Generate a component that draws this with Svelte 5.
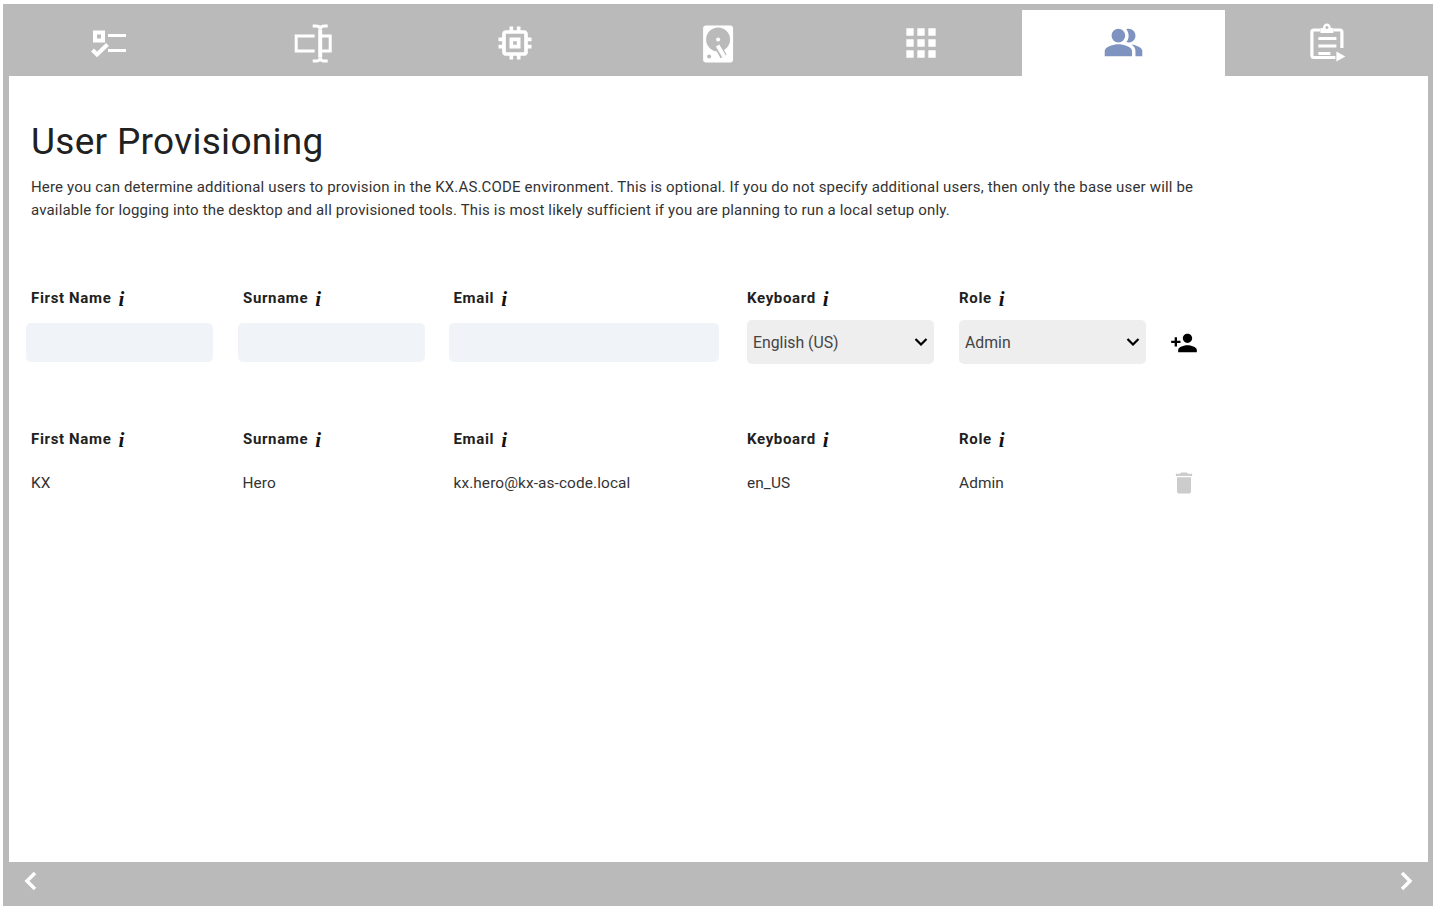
<script>
	const columns = ['First Name', 'Surname', 'Email', 'Keyboard', 'Role'];
	const users = [
		{ firstName: 'KX', surname: 'Hero', email: 'kx.hero@kx-as-code.local', keyboard: 'en_US', role: 'Admin' }
	];
	const keyboards = ['English (US)', 'German', 'French'];
	const roles = ['Admin', 'Normal'];
	const activeTab = 5;
</script>

{#snippet tabIcon(index)}
	{#if index === 0}
		<svg class="tab-svg" width="44" height="44" viewBox="87 20.500 44 44">
			<path fill-rule="evenodd" d="M93 30h12v12H93zM97 34v4h4v-4z" />
			<path d="M108 33.500h18v3h-18zM108 48.500h18v3h-18z" />
			<path fill="none" stroke="#fff" stroke-width="4" d="M92.500 49.500l4.500 4.500 10.500-10" />
		</svg>
	{:else if index === 1}
		<svg class="tab-svg" width="44" height="44" viewBox="290.300 20.500 44 44">
			<path fill="none" stroke="#fff" stroke-width="3" d="M315 35.500h-18.500v15H315M320 35.500h10.500v15H320" />
			<path fill="none" stroke="#fff" stroke-width="4" d="M320.500 29v28" />
			<path fill="none" stroke="#fff" stroke-width="3" d="M313 25.500h3q4.500 0 4.500 3.500 0-3.500 4.500-3.500h3M313 60.500h3q4.500 0 4.500-3.500 0 3.500 4.500 3.500h3" />
		</svg>
	{:else if index === 2}
		<svg class="tab-svg" width="44" height="44" viewBox="0 0 24 24">
			<path d="M15 9H9v6h6V9zm-2 4h-2v-2h2v2zm8-2V9h-2V7c0-1.100-.9-2-2-2h-2V3h-2v2h-2V3H9v2H7c-1.100 0-2 .9-2 2v2H3v2h2v2H3v2h2v2c0 1.100.9 2 2 2h2v2h2v-2h2v2h2v-2h2c1.100 0 2-.9 2-2v-2h2v-2h-2v-2h2zm-4 6H7V7h10v10z" />
		</svg>
	{:else if index === 3}
		<svg class="tab-svg" width="44" height="44" viewBox="695.900 20.500 44 44">
			<rect x="703" y="25" width="30" height="37" rx="3" />
			<circle cx="718" cy="39" r="12" fill="#bababa" />
			<circle cx="718" cy="39" r="2" />
			<path fill="none" stroke="#bababa" stroke-width="7" d="M717.500 45l6 11" />
			<path fill="none" stroke="#fff" stroke-width="4" d="M717.500 45l6.500 11" />
			<circle cx="709" cy="56" r="2" fill="#bababa" />
		</svg>
	{:else if index === 4}
		<svg class="tab-svg" width="44" height="44" viewBox="0 0 24 24">
			<path d="M4 8h4V4H4v4zm6 12h4v-4h-4v4zm-6 0h4v-4H4v4zm0-6h4v-4H4v4zm6 0h4v-4h-4v4zm6-10v4h4V4h-4zm-6 4h4V4h-4v4zm6 6h4v-4h-4v4zm0 6h4v-4h-4v4z" />
		</svg>
	{:else if index === 5}
		<svg class="tab-svg active-svg" width="41" height="41" viewBox="0 0 24 24">
			<path d="M16.670 13.130C18.040 14.060 19 15.320 19 17v3h4v-3c0-2.180-3.570-3.470-6.330-3.870z" />
			<circle cx="9" cy="8" r="4" />
			<path d="M15 12c2.210 0 4-1.790 4-4s-1.790-4-4-4c-.47 0-.91.1-1.330.24C14.500 5.270 15 6.580 15 8s-.5 2.730-1.330 3.760c.42.14.86.24 1.330.24z" />
			<path d="M9 13c-2.670 0-8 1.340-8 4v3h16v-3c0-2.660-5.330-4-8-4z" />
		</svg>
	{:else}
		<svg class="tab-svg" width="44" height="44" viewBox="1304.600 20.500 44 44">
			<path fill="none" stroke="#fff" stroke-width="3.200" stroke-linejoin="round" d="M1320 29.500h-6.500q-2 0-2 2v23.500q0 2 2 2h21.500M1333 29.500h6.500q2 0 2 2v16" />
			<path fill-rule="evenodd" d="M1320 27.500h2.500q.5-4.500 4-4.500t4 4.500h2.500v5h-13zM1326.500 25.500a1.500 1.500 0 1 0 .01 0z" />
			<path d="M1318 36.500h18v3h-18zM1318 44h18v3h-18zM1318 51.500h12v3h-12z" />
			<path d="M1336 51l9 5-9 5z" />
		</svg>
	{/if}
{/snippet}

{#snippet headings()}
	{#each columns as column}
		<div class="heading">{column}<span class="info">i</span></div>
	{/each}
{/snippet}

<div class="page">
	<div class="shell">
		<nav class="tabs">
			{#each Array(7) as _, index}
				<div class="tab" class:active={index === activeTab}>
					{@render tabIcon(index)}
				</div>
			{/each}
		</nav>

		<main class="content">
			<h1>User Provisioning</h1>
			<p class="description">
				Here you can determine additional users to provision in the KX.AS.CODE environment. This is optional. If you do not specify additional users, then only the base user will be available for logging into the desktop and all provisioned tools. This is most likely sufficient if you are planning to run a local setup only.
			</p>

			<div class="grid form-grid">
				{@render headings()}
				<div class="spacer"></div>

				<input class="text-input" type="text" aria-label="First Name" />
				<input class="text-input" type="text" aria-label="Surname" />
				<input class="text-input email" type="text" aria-label="Email" />
				<select class="select" aria-label="Keyboard">
					{#each keyboards as keyboard}
						<option>{keyboard}</option>
					{/each}
				</select>
				<select class="select" aria-label="Role">
					{#each roles as role}
						<option>{role}</option>
					{/each}
				</select>
				<button class="icon-button add" aria-label="Add user">
					<svg width="28" height="28" viewBox="0 0 24 24">
						<path d="M15 12c2.210 0 4-1.790 4-4s-1.790-4-4-4-4 1.790-4 4 1.790 4 4 4zm-9-2V7H4v3H1v2h3v3h2v-3h3v-2H6zm9 4c-2.670 0-8 1.340-8 4v2h16v-2c0-2.660-5.330-4-8-4z" />
					</svg>
				</button>
			</div>

			<div class="grid user-grid">
				{@render headings()}
				<div class="spacer"></div>

				{#each users as user}
					<div class="cell first">{user.firstName}</div>
					<div class="cell second">{user.surname}</div>
					<div class="cell third">{user.email}</div>
					<div class="cell">{user.keyboard}</div>
					<div class="cell">{user.role}</div>
					<button class="icon-button trash" aria-label="Delete user">
						<svg width="28" height="28" viewBox="0 0 24 24">
							<path d="M6 19c0 1.100.9 2 2 2h8c1.100 0 2-.9 2-2V7H6v12zM19 4h-3.500l-1-1h-5l-1 1H5v2h14V4z" />
						</svg>
					</button>
				{/each}
			</div>
		</main>

		<footer class="footer">
			<svg width="14" height="20" viewBox="0 0 14 20"><path d="M11 2L3 10l8 8" /></svg>
			<svg width="14" height="20" viewBox="0 0 14 20"><path d="M3 2l8 8-8 8" /></svg>
		</footer>
	</div>
</div>

<style>
	:global(body) {
		margin: 0;
		background: #fff;
		font-family: Roboto, 'Liberation Sans', sans-serif;
		color: #333;
	}

	.page {
		box-sizing: border-box;
		height: 908px;
		padding: 4px 3px 2px;
	}

	.shell {
		display: flex;
		flex-direction: column;
		height: 100%;
		background: #bababa;
	}

	.tabs {
		display: flex;
		height: 72px;
		padding: 0 5px;
		flex-shrink: 0;
	}

	.tab {
		flex: 1;
		display: flex;
		align-items: center;
		justify-content: center;
		padding-top: 5px;
	}

	.tab.active {
		margin-top: 6px;
		padding-top: 0;
		padding-bottom: 1px;
		background: #fff;
	}

	.tab-svg {
		display: block;
		fill: #fff;
	}

	.active-svg {
		fill: #7f93c1;
	}

	.content {
		flex: 1;
		margin: 0 5px 0 6px;
		padding: 45px 0 0 22px;
		background: #fff;
	}

	h1 {
		margin: 0;
		font-size: 37px;
		font-weight: 400;
		letter-spacing: 0.3px;
		line-height: 42px;
		color: #212121;
	}

	.description {
		width: 1170px;
		margin: 13px 0 0;
		font-size: 15px;
		letter-spacing: 0.165px;
		line-height: 23px;
		color: #333;
	}

	.grid {
		display: grid;
		grid-template-columns: 212px 211px 298px 212px 212px 40px;
		margin-left: -5px;
	}

	.form-grid {
		margin-top: 66px;
		grid-template-rows: 20px 44px;
		row-gap: 12px;
		align-items: center;
	}

	.user-grid {
		margin-top: 65px;
		grid-template-rows: 20px 44px;
		row-gap: 12px;
		align-items: center;
	}

	.heading {
		font-size: 15px;
		font-weight: 700;
		letter-spacing: 0.65px;
		line-height: 19px;
		color: #212121;
		white-space: nowrap;
	}

	.heading:nth-child(1) {
		padding-left: 5px;
	}

	.heading:nth-child(2) {
		padding-left: 5px;
	}

	.heading:nth-child(3) {
		padding-left: 4.500px;
	}

	.info {
		margin-left: 7px;
		font-family: 'Liberation Serif', serif;
		font-style: italic;
		font-weight: 700;
		font-size: 21px;
		line-height: 0;
		vertical-align: -3px;
		color: #111;
	}

	.text-input {
		box-sizing: border-box;
		width: 187px;
		height: 39px;
		padding: 0 5px;
		border: none;
		border-radius: 5px;
		background: #f0f3f8;
	}

	.text-input.email {
		width: 270px;
	}

	.select {
		box-sizing: border-box;
		width: 187px;
		height: 44px;
		padding: 0 6px;
		border: none;
		border-radius: 5px;
		appearance: none;
		background-color: #eee;
		background-image: url("data:image/svg+xml,%3Csvg xmlns='http://www.w3.org/2000/svg' width='14' height='8' viewBox='0 0 14 8'%3E%3Cpath d='M1.500 1l5.500 5.500L12.500 1' fill='none' stroke='%23000' stroke-width='2.200'/%3E%3C/svg%3E");
		background-repeat: no-repeat;
		background-position: right 6px center;
		font-family: inherit;
		font-size: 15.800px;
		color: #444;
	}

	.icon-button {
		display: flex;
		align-items: center;
		justify-content: flex-start;
		width: 30px;
		height: 30px;
		padding: 0;
		border: none;
		background: none;
	}

	.icon-button svg {
		flex-shrink: 0;
		margin-left: -1px;
	}

	.add svg {
		margin-top: 2px;
		fill: #000;
	}

	.trash svg {
		fill: #ccc;
	}

	.cell {
		font-size: 15.400px;
		letter-spacing: 0.1px;
		color: #333;
	}

	.cell.first {
		padding-left: 5px;
	}

	.cell.second {
		padding-left: 4.500px;
	}

	.cell.third {
		padding-left: 4.500px;
	}

	.footer {
		display: flex;
		align-items: center;
		justify-content: space-between;
		flex-shrink: 0;
		box-sizing: border-box;
		height: 44px;
		padding: 0 20px 6px 21px;
	}

	.footer svg path {
		fill: none;
		stroke: #fff;
		stroke-width: 3.500;
	}
</style>
